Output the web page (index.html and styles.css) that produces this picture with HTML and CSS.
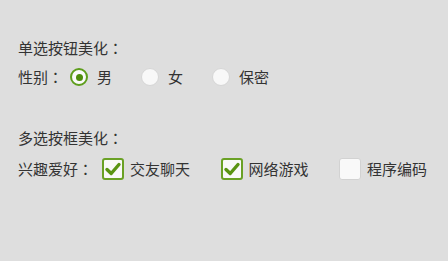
FILE: index.html
```html
<!DOCTYPE html>
<html lang="zh">
<head>
<meta charset="utf-8">
<link rel="stylesheet" href="styles.css">
</head>
<body>
<div class="page">
  <div class="title">单选按钮美化<span class="colon">：</span></div>
  <div class="row radios">
    <span class="label">性别<span class="colon">：</span></span>
    <span class="opt"><span class="radio checked"></span><span class="txt">男</span></span>
    <span class="opt"><span class="radio"></span><span class="txt">女</span></span>
    <span class="opt"><span class="radio"></span><span class="txt">保密</span></span>
  </div>
  <div class="title title2">多选按框美化<span class="colon">：</span></div>
  <div class="row checks">
    <span class="label">兴趣爱好<span class="colon">：</span></span>
    <span class="opt"><span class="box checked"><svg viewBox="0 0 22 22" width="22" height="22"><path d="M5 11.5 L9.2 15.5 L17 6.5" fill="none" stroke="#5a9413" stroke-width="3.4" stroke-linecap="round" stroke-linejoin="round"/></svg></span><span class="txt">交友聊天</span></span>
    <span class="opt"><span class="box checked"><svg viewBox="0 0 22 22" width="22" height="22"><path d="M5 11.5 L9.2 15.5 L17 6.5" fill="none" stroke="#5a9413" stroke-width="3.4" stroke-linecap="round" stroke-linejoin="round"/></svg></span><span class="txt">网络游戏</span></span>
    <span class="opt"><span class="box"></span><span class="txt">程序编码</span></span>
  </div>
</div>
</body>
</html>
```
FILE: styles.css
```css
html, body {
  margin: 0;
  padding: 0;
  background: #dedede;
}
.page {
  padding: 38px 0 0 18px;
  font-family: "Noto Sans CJK SC", "Noto Sans", sans-serif;
  font-size: 15px;
  color: #333;
  white-space: nowrap;
}
.colon {
  display: inline-block;
  width: 15px;
  text-align: center;
  font-family: "Noto Sans CJK JP", sans-serif;
}
.title {
  height: 20px;
  line-height: 20px;
}
.title2 {
  margin-top: 40px;
}
.row {
  display: flex;
  align-items: center;
  height: 22px;
  line-height: 22px;
}
.row > * {
  flex-shrink: 0;
}
.radios {
  margin-top: 8px;
}
.checks {
  margin-top: 10px;
}
.opt {
  display: flex;
  align-items: center;
}
.radios .label {
  margin-right: 7px;
}
.radios .opt {
  margin-right: 29px;
}
.radios .txt {
  margin-left: 9px;
}
.radio {
  box-sizing: border-box;
  flex-shrink: 0;
  width: 18px;
  height: 18px;
  border-radius: 50%;
  background: #f8f8f8;
  border: 1px solid #d6d6d6;
  display: flex;
  align-items: center;
  justify-content: center;
}
.radio.checked {
  border: 2px solid #5e9e1c;
  background: #fafafa;
}
.radio.checked::after {
  content: "";
  width: 7px;
  height: 7px;
  border-radius: 50%;
  background: #4f8d0c;
}
.checks .label {
  margin-right: 9px;
}
.checks .opt {
  margin-right: 30.5px;
}
.checks .txt {
  margin-left: 6px;
}
.box {
  box-sizing: border-box;
  flex-shrink: 0;
  width: 22px;
  height: 22px;
  border-radius: 3px;
  background: #f9f9f9;
  border: 1px solid #d2d2d2;
  position: relative;
}
.box.checked {
  border: 2px solid #6aa125;
}
.box svg {
  position: absolute;
  left: -2px;
  top: -2px;
}
```
